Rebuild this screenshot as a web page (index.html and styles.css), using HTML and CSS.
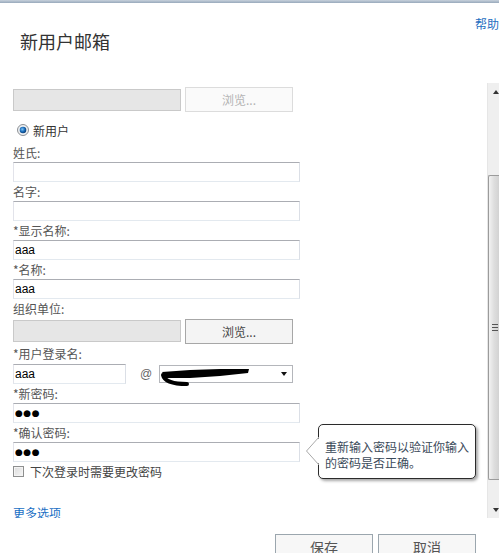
FILE: index.html
```html
<!DOCTYPE html>
<html lang="zh-CN">
<head>
<meta charset="utf-8">
<title>新用户邮箱</title>
<link rel="stylesheet" href="styles.css">
</head>
<body>
<div class="page">
  <div class="topbar"></div>
  <header class="header">
    <h1 class="title">新用户邮箱</h1>
    <a class="help" href="#">帮助</a>
  </header>
  <div class="frame">
    <div class="content">
      <div class="browse-row">
        <div class="field-disabled"></div>
        <button class="btn btn-disabled" disabled>浏览...</button>
      </div>
      <div class="radio-row">
        <svg class="radio" width="12" height="12" viewBox="0 0 12 12">
          <defs>
            <radialGradient id="rg" cx="0.4" cy="0.4" r="0.6">
              <stop offset="0" stop-color="#7cc3f5"/>
              <stop offset="0.6" stop-color="#1a6bb8"/>
              <stop offset="1" stop-color="#0c3f78"/>
            </radialGradient>
          </defs>
          <circle cx="6" cy="6" r="5.5" fill="#eef0f2" stroke="#8c8f94"/>
          <circle cx="6" cy="6" r="3.3" fill="url(#rg)"/>
        </svg>
        <span class="radio-label">新用户</span>
      </div>
      <div class="label first">姓氏:</div>
      <input class="input" type="text" value="">
      <div class="label">名字:</div>
      <input class="input" type="text" value="">
      <div class="label">*显示名称:</div>
      <input class="input" type="text" value="aaa">
      <div class="label">*名称:</div>
      <input class="input" type="text" value="aaa">
      <div class="label">组织单位:</div>
      <div class="browse-row org">
        <div class="field-disabled"></div>
        <button class="btn">浏览...</button>
      </div>
      <div class="label">*用户登录名:</div>
      <div class="login-row">
        <input class="input input-short" type="text" value="aaa">
        <span class="at">@</span>
        <div class="select">
          <svg class="redact" width="92" height="22" viewBox="0 0 92 22">
            <path d="M2 5 L 30 3 L 60 2 L 89 2 L 88 6 L 60 9 L 30 11 L 6 11 Z" fill="#000"/>
            <path d="M3 8 Q 5 17, 27 17" stroke="#000" stroke-width="4" fill="none" stroke-linecap="round"/>
          </svg>
          <span class="caret"></span>
        </div>
      </div>
      <div class="label">*新密码:</div>
      <input class="input pw" type="text" value="●●●">
      <div class="label">*确认密码:</div>
      <div class="pw-wrap">
        <input class="input pw" type="text" value="●●●">
        <div class="tooltip">
          <svg class="tip-arrow" width="15" height="30" viewBox="0 0 15 30">
            <polygon points="15,0 1.5,14 15,28" fill="#fff"/>
            <polyline points="14,0 1.5,14 14,28" fill="none" stroke="#a9a9a9"/>
          </svg>
          <p class="tip-line">重新输入密码以验证你输入</p>
          <p class="tip-line">的密码是否正确。</p>
        </div>
      </div>
      <div class="check-row">
        <span class="checkbox"></span>
        <span class="check-label">下次登录时需要更改密码</span>
      </div>
      <a class="more" href="#">更多选项</a>
    </div>
    <div class="scrollbar">
      <div class="sb-btn"><span class="sb-up"></span></div>
      <div class="sb-gap-top"></div>
      <div class="sb-thumb"><span class="grip"></span></div>
      <div class="sb-gap-bottom"></div>
      <div class="sb-btn"><span class="sb-down"></span></div>
    </div>
  </div>
  <footer class="footer">
    <button class="fbtn">保存</button>
    <button class="fbtn">取消</button>
  </footer>
</div>
</body>
</html>
```

FILE: styles.css
```css
html, body {
  margin: 0;
  padding: 0;
  background: #fff;
}
body {
  width: 499px;
  height: 553px;
  overflow: hidden;
  font-family: "Noto Sans CJK SC", "Liberation Sans", sans-serif;
  font-size: 12px;
  color: #444;
}
.page {
  position: relative;
  width: 499px;
  height: 553px;
  display: flex;
  flex-direction: column;
}
.topbar {
  height: 3px;
  background: linear-gradient(#c7d1dc, #98a9bb);
  flex: none;
}
.header {
  position: relative;
  height: 80px;
  flex: none;
}
.title {
  margin: 0;
  padding: 26px 0 0 20px;
  font-size: 18px;
  line-height: 24px;
  font-weight: normal;
  color: #333;
}
.help {
  position: absolute;
  top: 12px;
  right: 0;
  font-size: 12px;
  line-height: 17px;
  color: #1f6fc1;
  text-decoration: none;
}
.frame {
  display: flex;
  height: 435px;
  flex: none;
  overflow: hidden;
}
.content {
  flex: 1;
  padding: 4px 0 0 13px;
  overflow: hidden;
  display: flex;
  flex-direction: column;
  align-items: flex-start;
}
.content > * {
  flex-shrink: 0;
}
.browse-row {
  display: flex;
  align-items: center;
  gap: 4px;
  height: 25px;
}
.browse-row.org {
  height: 26px;
}
.field-disabled {
  width: 168px;
  height: 22px;
  box-sizing: border-box;
  background: #e6e6e6;
  border: 1px solid #c9c9c9;
}
.btn {
  width: 108px;
  height: 25px;
  box-sizing: border-box;
  margin: 0;
  padding: 0;
  background: #f4f4f4;
  border: 1px solid #a7a7a7;
  font-family: "Noto Sans CJK SC", "Liberation Sans", sans-serif;
  font-size: 12px;
  color: #444;
}
.btn-disabled {
  background: #fafafa;
  border-color: #dcdcdc;
  color: #b3b3b3;
}
.radio-row {
  display: flex;
  align-items: center;
  height: 22px;
  margin: 7px 0 2px 4px;
}
.radio {
  display: block;
  margin-right: 4px;
}
.radio-label {
  color: #333;
  line-height: 19px;
}
.label {
  height: 19px;
  line-height: 19px;
  color: #555;
  white-space: nowrap;
}
.input {
  display: block;
  width: 287px;
  height: 20px;
  box-sizing: border-box;
  margin: 0;
  padding: 0 1px;
  border: 1px solid;
  border-color: #abadb3 #dbdfe6 #e3e9ef #e2e3ea;
  background: #fff;
  font-family: "Liberation Sans", sans-serif;
  font-size: 12px;
  color: #000;
  outline: none;
}
.pw {
  font-family: "DejaVu Sans", sans-serif;
  font-size: 9px;
  letter-spacing: 0.5px;
}
.login-row {
  display: flex;
  align-items: center;
  height: 21px;
}
.input-short {
  width: 113px;
}
.at {
  margin-left: 14px;
  width: 12px;
  color: #666;
  font-family: "Liberation Sans", sans-serif;
  font-size: 12px;
}
.select {
  position: relative;
  margin-left: 7px;
  width: 134px;
  height: 18px;
  box-sizing: border-box;
  border: 1px solid #b4b6bb;
  background: #fff;
  display: flex;
  align-items: center;
  justify-content: flex-end;
  padding-right: 5px;
}
.redact {
  position: absolute;
  left: 0;
  top: 1px;
  overflow: visible;
}
.caret {
  width: 0;
  height: 0;
  border-left: 3.5px solid transparent;
  border-right: 3.5px solid transparent;
  border-top: 4px solid #111;
}
.pw-wrap {
  position: relative;
}
.tooltip {
  position: absolute;
  left: 305px;
  top: -18px;
  width: 158px;
  height: 55px;
  box-sizing: border-box;
  padding: 14px 0 0 6px;
  border: 1px solid #2b2b2b;
  border-radius: 5px;
  background: #fff;
  box-shadow: 2px 2px 3px rgba(0, 0, 0, 0.35);
  font-size: 12px;
  color: #3b4a5a;
  white-space: nowrap;
}
.tip-line {
  margin: 0;
  height: 16px;
  line-height: 16px;
}
.tip-arrow {
  position: absolute;
  left: -14px;
  top: 12px;
}
.check-row {
  display: flex;
  align-items: center;
  height: 19px;
}
.checkbox {
  width: 11px;
  height: 11px;
  box-sizing: border-box;
  border: 1px solid #8e8f8f;
  background: linear-gradient(135deg, #dcdcdc, #f6f6f6);
  box-shadow: inset 0 0 0 1px #f4f4f4;
  margin-right: 6px;
}
.check-label {
  color: #444;
  line-height: 19px;
}
.more {
  margin-top: 23px;
  line-height: 18px;
  color: #1a6fc4;
  text-decoration: none;
  white-space: nowrap;
}
.scrollbar {
  width: 12px;
  flex: none;
  display: flex;
  flex-direction: column;
  background: #efefef;
  border-left: 1px solid #e6e6e6;
  box-sizing: border-box;
}
.sb-btn {
  height: 17px;
  flex: none;
  display: flex;
  align-items: center;
  padding-left: 5px;
}
.sb-up {
  width: 0;
  height: 0;
  border-left: 3.5px solid transparent;
  border-right: 3.5px solid transparent;
  border-bottom: 4px solid #333;
}
.sb-down {
  width: 0;
  height: 0;
  border-left: 3.5px solid transparent;
  border-right: 3.5px solid transparent;
  border-top: 4px solid #333;
}
.sb-gap-top {
  height: 75px;
  flex: none;
}
.sb-thumb {
  height: 305px;
  flex: none;
  box-sizing: border-box;
  border: 1px solid #9b9b9b;
  border-right: none;
  border-radius: 2px 0 0 2px;
  background: linear-gradient(90deg, #f2f2f2, #dedede 50%, #d2d2d2);
  display: flex;
  align-items: center;
  padding-left: 3px;
}
.grip {
  width: 6px;
  height: 5px;
  border-top: 1px solid #555;
  border-bottom: 1px solid #555;
  position: relative;
}
.grip::after {
  content: "";
  position: absolute;
  left: 0;
  right: 0;
  top: 2px;
  border-top: 1px solid #555;
}
.sb-gap-bottom {
  flex: 1;
}
.footer {
  flex: 1;
  display: flex;
  justify-content: flex-end;
  align-items: flex-start;
  gap: 5px;
  padding: 16px 23px 0 0;
}
.fbtn {
  width: 98px;
  height: 26px;
  flex: none;
  box-sizing: border-box;
  margin: 0;
  padding: 0;
  background: #f7f7f7;
  border: 1px solid #9ba6ae;
  font-family: "Noto Sans CJK SC", "Liberation Sans", sans-serif;
  font-size: 14px;
  line-height: 24px;
  color: #555;
}
```
